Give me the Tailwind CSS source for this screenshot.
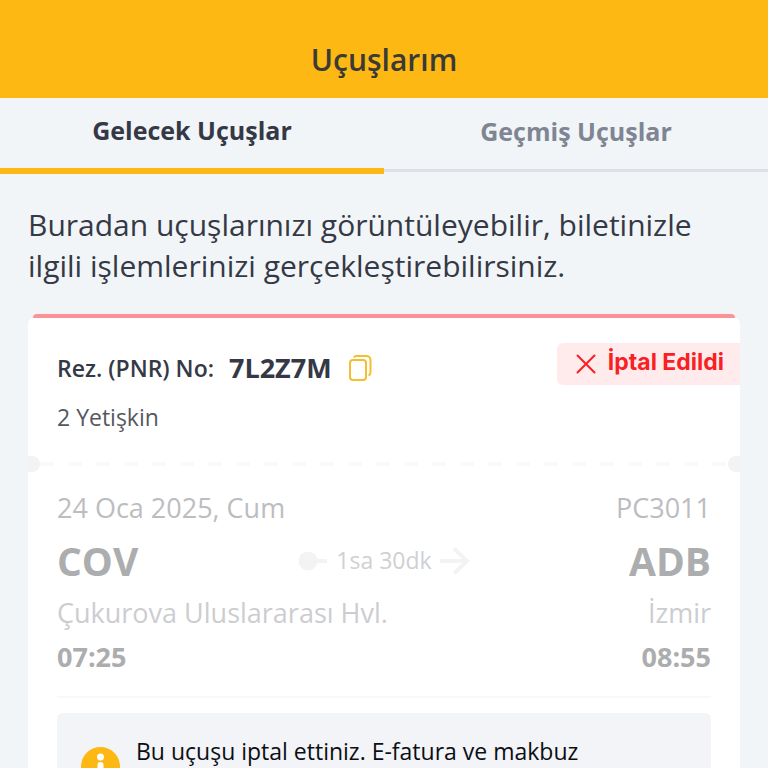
<!DOCTYPE html>
<html lang="tr">
<head>
  <meta charset="UTF-8">
  <meta name="viewport" content="width=device-width, initial-scale=1.0">
  <title>Uçuşlarım</title>
  <script src="https://cdn.jsdelivr.net/npm/@tailwindcss/browser@4"></script>
</head>
<body class="h-screen overflow-hidden flex flex-col bg-[#f1f5f8] text-[#353945] font-['Open_Sans',sans-serif]">

  <!-- Header -->
  <header class="bg-[#fdb813] pt-10 pb-[18px]">
    <h1 class="text-center text-[30px] leading-10 font-semibold text-[#3b3a35]">Uçuşlarım</h1>
  </header>

  <!-- Tabs -->
  <nav class="grid grid-cols-2 items-start text-[25px] font-bold">
    <button type="button" class="h-[76px] pb-1 border-b-[6px] border-[#fdb813]">Gelecek Uçuşlar</button>
    <button type="button" class="h-[74px] pb-1 border-b-[3px] border-[#dde1e5] text-[#7f8593]">Geçmiş Uçuşlar</button>
  </nav>

  <main class="grow flex flex-col px-7 pt-[30px]">
    <p class="text-[30px] leading-[41px]">Buradan uçuşlarınızı görüntüleyebilir, biletinizle ilgili işlemlerinizi gerçekleştirebilirsiniz.</p>

    <!-- Reservation card -->
    <div class="mt-7 mx-[5px] h-1 rounded-t-full bg-[#fc9196]"></div>
    <section class="grow bg-white rounded-t-md">

      <!-- Reservation number + status -->
      <div class="flex justify-between items-start pt-[25px] pl-[29px]">
        <div>
          <div class="flex items-center h-[50px]">
            <span class="text-[23px] font-semibold">Rez. (PNR) No:</span>
            <span class="ml-[15px] text-[27px] font-bold">7L2Z7M</span>
            <button type="button" aria-label="Kopyala" class="ml-4">
              <svg class="w-6 h-7" viewBox="0 0 24 28" fill="none" stroke="#f6bd2f" stroke-width="2">
                <rect x="2" y="6" width="16" height="20" rx="3"/>
                <path d="M6 3.5C6.500 2.500 7.500 2 8.500 2H18.500a4 4 0 0 1 4 4V18.500c0 1.500-.8 2.500-2 3"/>
              </svg>
            </button>
          </div>
          <p class="mt-1 text-[23px] leading-10 text-[#55585f]">2 Yetişkin</p>
        </div>
        <div class="flex items-center h-[42px] pl-[19px] pr-4 rounded-l-md bg-[#ffebeb] text-[#f91f25]">
          <svg class="w-5 h-5" viewBox="0 0 20 20" fill="none" stroke="currentColor" stroke-width="2" stroke-linecap="round">
            <path d="M1.500 1.500l17 17M18.500 1.500l-17 17"/>
          </svg>
          <span class="ml-3 pb-1 text-[23px] leading-8 font-bold font-['Inter',sans-serif]">İptal Edildi</span>
        </div>
      </div>

      <!-- Ticket tear line -->
      <div class="flex items-center mt-[19px] overflow-hidden">
        <div class="w-3 h-4 rounded-r-full bg-[#f2f3f4]"></div>
        <svg class="grow h-1" aria-hidden="true">
          <line x1="0" y1="2" x2="100%" y2="2" stroke="#fafafa" stroke-width="4" stroke-dasharray="14 14"/>
        </svg>
        <div class="w-3 h-4 rounded-l-full bg-[#f2f3f4]"></div>
      </div>

      <!-- Flight -->
      <div class="px-[29px] pt-[18px]">
        <div class="flex justify-between text-[27px] leading-9 text-[#bcbdbf]">
          <span>24 Oca 2025, Cum</span>
          <span>PC3011</span>
        </div>
        <div class="grid grid-cols-[1fr_auto_1fr] items-center mt-2 text-[39px] leading-[53px] font-bold text-[#abadaf]">
          <span>COV</span>
          <div class="flex items-center text-[23px] font-normal text-[#cfd0d3]">
            <svg class="w-[30px] h-5" viewBox="0 0 30 20">
              <circle cx="10" cy="10" r="9.500" fill="#f3f3f3"/>
              <path d="M18 10h11" stroke="#f3f3f3" stroke-width="4"/>
            </svg>
            <span class="mx-2">1sa 30dk</span>
            <svg class="w-[30px] h-7" viewBox="0 0 30 28" fill="none" stroke="#f3f3f3" stroke-width="4">
              <path d="M0 14h26M14 1.500L27 14 14 26.500"/>
            </svg>
          </div>
          <span class="text-right">ADB</span>
        </div>
        <div class="flex justify-between mt-2 text-[27px] leading-9 text-[#cccdd0]">
          <span>Çukurova Uluslararası Hvl.</span>
          <span>İzmir</span>
        </div>
        <div class="flex justify-between mt-2 text-[27px] leading-9 font-bold text-[#abadaf]">
          <span>07:25</span>
          <span>08:55</span>
        </div>

        <hr class="mt-[21px] border-t-2 border-[#f9f9f9]">

        <!-- Cancellation note -->
        <div class="flex items-start mt-[15px] pt-[22px] pl-6 rounded-md bg-[#f2f4f7]">
          <svg class="shrink-0 mt-3 w-[39px] h-[39px]" viewBox="0 0 39 39">
            <circle cx="19.500" cy="19.500" r="19.500" fill="#fdb813"/>
            <circle cx="19.500" cy="10" r="3.500" fill="#fff"/>
            <rect x="16.500" y="15" width="6" height="16" rx="3" fill="#fff"/>
          </svg>
          <p class="ml-4 text-[23px] leading-8 text-[#0c0e13]">Bu uçuşu iptal ettiniz. E-fatura ve makbuz</p>
        </div>
      </div>
    </section>
  </main>

</body>
</html>
